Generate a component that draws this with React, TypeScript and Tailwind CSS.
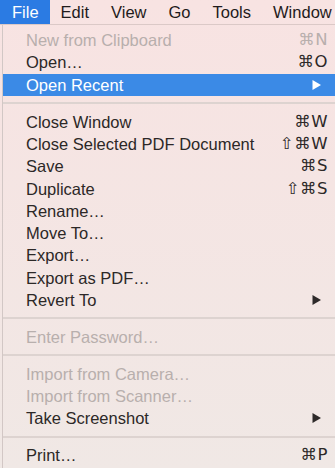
import { ReactNode } from 'react';

type Item =
  | { sep: true }
  | { label: string; key?: string; disabled?: boolean; active?: boolean; sub?: boolean; sep?: false };

const items: Item[] = [
  { label: 'New from Clipboard', key: '⌘N', disabled: true },
  { label: 'Open…', key: '⌘O' },
  { label: 'Open Recent', sub: true, active: true },
  { sep: true },
  { label: 'Close Window', key: '⌘W' },
  { label: 'Close Selected PDF Document', key: '⇧⌘W' },
  { label: 'Save', key: '⌘S' },
  { label: 'Duplicate', key: '⇧⌘S' },
  { label: 'Rename…' },
  { label: 'Move To…' },
  { label: 'Export…' },
  { label: 'Export as PDF…' },
  { label: 'Revert To', sub: true },
  { sep: true },
  { label: 'Enter Password…', disabled: true },
  { sep: true },
  { label: 'Import from Camera…', disabled: true },
  { label: 'Import from Scanner…', disabled: true },
  { label: 'Take Screenshot', sub: true },
  { sep: true },
  { label: 'Print…', key: '⌘P' },
];

function Arrow({ white }: { white?: boolean }) {
  return (
    <svg width="9" height="10" viewBox="0 0 9 10" className="mr-[7px]">
      <path d="M0.5 0 L9 5 L0.5 10 Z" fill={white ? '#ffffff' : '#2e2a2a'} />
    </svg>
  );
}

function Row({ item }: { item: Item }): ReactNode {
  if (item.sep) return <div className="h-[2px] bg-[#ddd3d0] my-[6.3px]" />;
  const color = item.active ? 'text-white' : item.disabled ? 'text-[#b8afad]' : 'text-[#2c2827]';
  return (
    <div
      className={`flex items-center justify-between h-[22.3px] pl-[23px] pr-[7px] ${color} ${
        item.active ? 'bg-[#3b8ae6]' : ''
      }`}
    >
      <span>{item.label}</span>
      {item.sub ? (
        <Arrow white={item.active} />
      ) : (
        <span className="tracking-[0.5px]" style={{ fontFamily: '"DejaVu Sans", "Liberation Sans", sans-serif' }}>
          {item.key}
        </span>
      )}
    </div>
  );
}

export default function App() {
  return (
    <div
      className="w-[335px] h-[468px] overflow-hidden bg-gradient-to-b from-[#f8e3e2] to-[#f0e8e5] text-[16.5px] leading-[22px]"
      style={{ fontFamily: '"Liberation Sans", Arial, sans-serif' }}
    >
      <div className="flex h-[25px] items-center border-b border-[#dbc9c7] text-[#1f1b1b] whitespace-nowrap">
        <div className="h-full bg-[#2b7be3] text-white pl-[12px] pr-[11px] flex items-center">File</div>
        <div className="px-[11px]">Edit</div>
        <div className="px-[11px]">View</div>
        <div className="px-[11px]">Go</div>
        <div className="px-[11px]">Tools</div>
        <div className="px-[11px]">Window</div>
      </div>
      <div className="ml-[2px] border-l border-[#d2c7c5] h-full pt-[4px]">
        {items.map((it, i) => (
          <Row key={i} item={it} />
        ))}
      </div>
    </div>
  );
}
